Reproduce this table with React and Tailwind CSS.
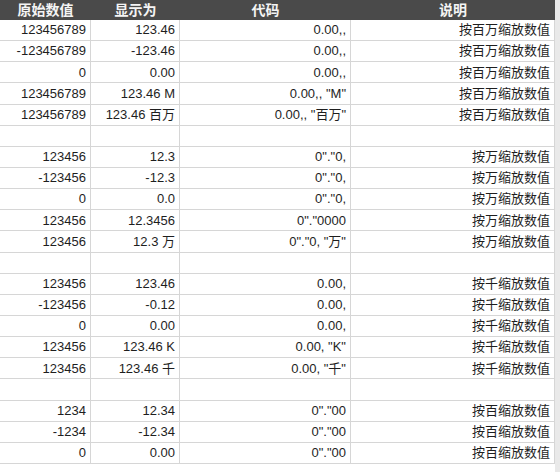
import React from "react";

const groups = [
  [
    ["123456789", "123.46", "0.00,,", "按百万缩放数值"],
    ["-123456789", "-123.46", "0.00,,", "按百万缩放数值"],
    ["0", "0.00", "0.00,,", "按百万缩放数值"],
    ["123456789", "123.46 M", '0.00,, "M"', "按百万缩放数值"],
    ["123456789", "123.46 百万", '0.00,, "百万"', "按百万缩放数值"],
  ],
  [
    ["123456", "12.3", '0"."0,', "按万缩放数值"],
    ["-123456", "-12.3", '0"."0,', "按万缩放数值"],
    ["0", "0.0", '0"."0,', "按万缩放数值"],
    ["123456", "12.3456", '0"."0000', "按万缩放数值"],
    ["123456", "12.3 万", '0"."0, "万"', "按万缩放数值"],
  ],
  [
    ["123456", "123.46", "0.00,", "按千缩放数值"],
    ["-123456", "-0.12", "0.00,", "按千缩放数值"],
    ["0", "0.00", "0.00,", "按千缩放数值"],
    ["123456", "123.46 K", '0.00, "K"', "按千缩放数值"],
    ["123456", "123.46 千", '0.00, "千"', "按千缩放数值"],
  ],
  [
    ["1234", "12.34", '0"."00', "按百缩放数值"],
    ["-1234", "-12.34", '0"."00', "按百缩放数值"],
    ["0", "0.00", '0"."00', "按百缩放数值"],
  ],
];

const rows = [];
groups.forEach((g, i) => {
  g.forEach((r) => rows.push(r));
  if (i < groups.length - 1) rows.push(["", "", "", ""]);
});

const font = { fontFamily: '"Liberation Sans", "Noto Sans CJK SC", sans-serif' };

function Cell({ children }) {
  return (
    <div className="h-[21.15px] flex items-center justify-end pr-[4px] border-r border-b border-[#d6d6d6] text-[13px] text-[#1e1e1e] whitespace-nowrap overflow-hidden">
      {children}
    </div>
  );
}

export default function App() {
  return (
    <div className="w-[560px] h-[472px] flex bg-white overflow-hidden" style={font}>
      <div className="w-[555px]">
        <div className="grid grid-cols-[91px_89px_171px_204px] h-[20px] bg-[#4a4a4a] text-[14px] font-bold text-[#f4f4f4]">
          <div className="flex items-center justify-center">原始数值</div>
          <div className="flex items-center justify-center">显示为</div>
          <div className="flex items-center justify-center">代码</div>
          <div className="flex items-center justify-center">说明</div>
        </div>
        <div className="grid grid-cols-[91px_89px_171px_204px]">
          {rows.map((r, i) => (
            <React.Fragment key={i}>
              <Cell>{r[0]}</Cell>
              <Cell>{r[1]}</Cell>
              <Cell>{r[2]}</Cell>
              <Cell>{r[3]}</Cell>
            </React.Fragment>
          ))}
        </div>
      </div>
      <div className="flex-1 bg-[#e9e9e9]" />
    </div>
  );
}
